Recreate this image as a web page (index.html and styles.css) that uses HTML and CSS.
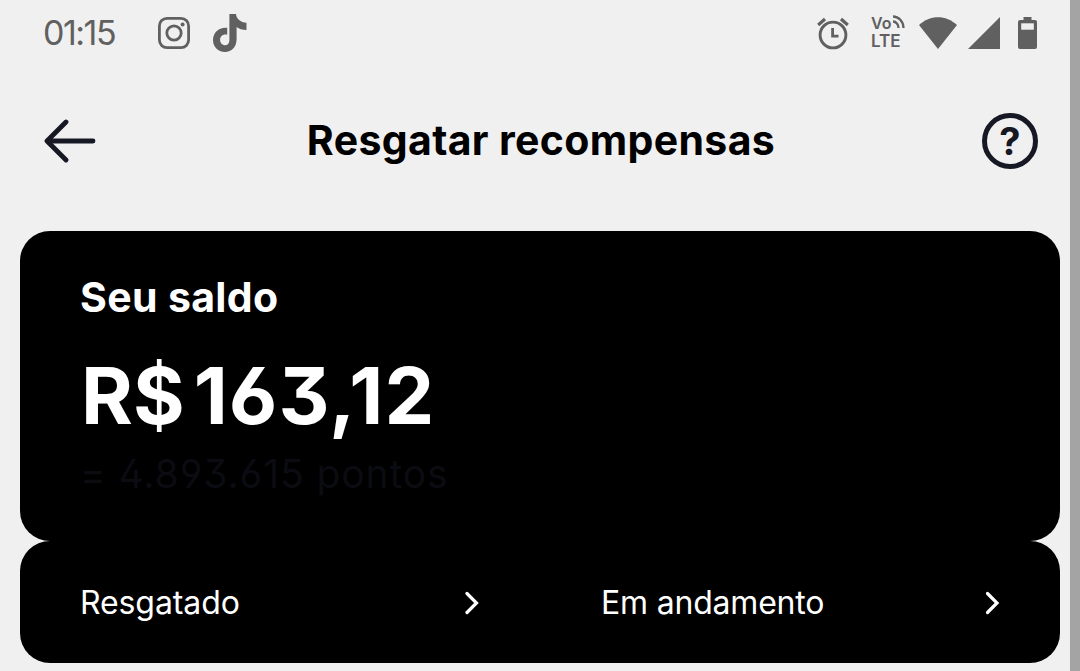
FILE: index.html
```
<!DOCTYPE html>
<html lang="pt-BR">
<head>
	<meta charset="utf-8">
	<title>Resgatar recompensas</title>
	<link rel="stylesheet" href="styles.css">
</head>
<body>

	<div class="status-bar">
		<span class="time">01:15</span>
		<svg class="icon-instagram" width="32" height="32" viewBox="0 0 32 32" fill="none" stroke="#606060">
			<rect x="1.4" y="1.4" width="29.2" height="29.2" rx="7.5" stroke-width="2.8"/>
			<circle cx="16" cy="16" r="7.2" stroke-width="2.8"/>
			<circle cx="24.6" cy="7.6" r="2" fill="#606060" stroke="none"/>
		</svg>
		<svg class="icon-tiktok" width="34" height="38" viewBox="0 0 34 38" fill="#606060">
			<path d="M16.4 0H23C23.3 4.8 27.5 8.4 33.5 8.7V16C29.5 16 26 15 23.6 13V25C23.6 33 18.5 38 12 38C5 38 0 32.6 0 26C0 18.4 6.3 12.8 14.2 13.8V20.8C10.5 19.7 7.1 22 7.1 25.7C7.1 29 9.5 31.2 12.2 31.2C15.3 31.2 16.4 28.8 16.4 25.6Z"/>
		</svg>

		<div class="status-right">
			<svg width="32" height="33" viewBox="0 0 32 33" fill="none" stroke="#606060">
				<circle cx="16" cy="18" r="12.9" stroke-width="2.9"/>
				<path d="M1.2 8L8 2M30.8 8L24 2" stroke-width="3.2"/>
				<path d="M15.6 11V19.2H21.5" stroke-width="2.8"/>
			</svg>
			<div class="volte">
				<div class="vo">Vo<svg width="13" height="14" viewBox="0 0 13 14" fill="none" stroke="#606060" stroke-width="2.3"><path d="M1 1.5C6.5 1.5 11.5 6.5 11.5 13M1 6.5C4.2 6.5 6.5 9.5 6.5 13"/></svg></div>
				<div class="lte">LTE</div>
			</div>
			<svg class="icon-wifi" width="38" height="32" viewBox="0 0 38 32" fill="#606060">
				<path d="M0 8C11 -2.4 27 -2.4 38 8L19 32Z"/>
			</svg>
			<svg class="icon-signal" width="32" height="32" viewBox="0 0 32 32" fill="#606060">
				<path d="M32 0V32H0Z"/>
			</svg>
			<svg class="icon-battery" width="19" height="32" viewBox="0 0 19 32">
				<path d="M5.5 0H13.5V3H17Q19 3 19 5V30Q19 32 17 32H2Q0 32 0 30V5Q0 3 2 3H5.5Z" fill="#606060"/>
				<rect x="3.2" y="6.3" width="12.6" height="6.4" fill="#f0f0f0"/>
			</svg>
		</div>
	</div>

	<header>
		<svg width="52" height="44" viewBox="0 0 52 44" fill="none" stroke="#161823" stroke-width="4.8" stroke-linecap="round" stroke-linejoin="round">
			<path d="M22 3L3 22L22 41"/>
			<path d="M4 22H49"/>
		</svg>
		<h1>Resgatar recompensas</h1>
		<span class="help">?</span>
	</header>

	<section class="balance">
		<h2>Seu saldo</h2>
		<div class="amount"><span class="currency">R$</span>163,12</div>
		<div class="points">= 4.893.615 pontos</div>
	</section>

	<nav class="links">
		<a class="link">
			<span class="redeemed">Resgatado</span>
			<svg width="15" height="24" viewBox="0 0 15 24" fill="none" stroke="#fff" stroke-width="3.2" stroke-linecap="round"><path d="M2 2.5L11.5 12L2 21.5"/></svg>
		</a>
		<a class="link">
			<span class="pending">Em andamento</span>
			<svg width="15" height="24" viewBox="0 0 15 24" fill="none" stroke="#fff" stroke-width="3.2" stroke-linecap="round"><path d="M2.5 2.5L12 12L2.5 21.5"/></svg>
		</a>
	</nav>

</body>
</html>
```
FILE: styles.css
```
* {
	box-sizing: border-box;
}

html {
	background-color: #f0f0f0;
}

body {
	margin: 0;
	height: 671px;
	overflow: hidden;
	border-right: 10px solid #a4a4a4;
	background-color: #f0f0f0;
	font-family: Inter, "Liberation Sans", sans-serif;
	color: #000;
}

svg {
	display: block;
	flex: none;
}

.status-bar {
	display: flex;
	align-items: center;
	height: 66px;
	padding: 0 33px 0 43px;
	color: #606060;
}

.time {
	width: 115px;
	font-size: 34px;
	line-height: 40px;
	letter-spacing: -1.5px;
}

.icon-tiktok {
	margin-left: 23px;
}

.status-right {
	display: flex;
	align-items: center;
	margin-left: auto;
}

.volte {
	width: 35px;
	margin: 0 13px 0 22px;
	font-weight: 600;
	font-size: 16px;
	line-height: 17px;
}

.vo {
	display: flex;
	gap: 1px;
	height: 16px;
}

.lte {
	height: 20px;
	font-size: 17px;
	line-height: 20px;
}

.icon-signal {
	margin-left: 11px;
}

.icon-battery {
	margin-left: 18px;
}

header {
	display: flex;
	align-items: center;
	justify-content: space-between;
	height: 150px;
	padding: 0 32px 0 44px;
}

h1, h2 {
	margin: 0;
	font-size: 41px;
	line-height: 50px;
	font-weight: 700;
	letter-spacing: 0.35px;
}

h1 {
	padding: 0 0 2px 4px;
}

.help {
	width: 56px;
	height: 56px;
	border: 5px solid #161823;
	border-radius: 50%;
	color: #161823;
	font-size: 38px;
	line-height: 46px;
	font-weight: 700;
	text-align: center;
}

.balance,
.links {
	margin: 0 10px 0 20px;
	border-radius: 30px;
	background-color: #000;
	color: #fff;
}

.balance {
	height: 310px;
	margin-top: 15px;
	padding: 41px 60px 0;
}

.amount {
	margin-top: 25px;
	padding-left: 1px;
	font-size: 79px;
	line-height: 96px;
	font-weight: 700;
	letter-spacing: 1.1px;
	font-feature-settings: "cv09", "ss01";
}

.currency {
	margin-right: 9px;
	letter-spacing: 0;
}

.points {
	margin-top: 7px;
	color: #0b0b12;
	font-size: 39px;
	line-height: 48px;
	letter-spacing: 0.9px;
	font-feature-settings: "cv09", "ss01";
}

.links {
	display: flex;
	height: 122px;
}

.link {
	display: flex;
	flex: 1;
	align-items: center;
	justify-content: space-between;
	padding: 1px 60px 0;
	font-size: 32px;
	letter-spacing: -0.1px;
}

.pending {
	padding-left: 1px;
	letter-spacing: -0.2px;
}
```
